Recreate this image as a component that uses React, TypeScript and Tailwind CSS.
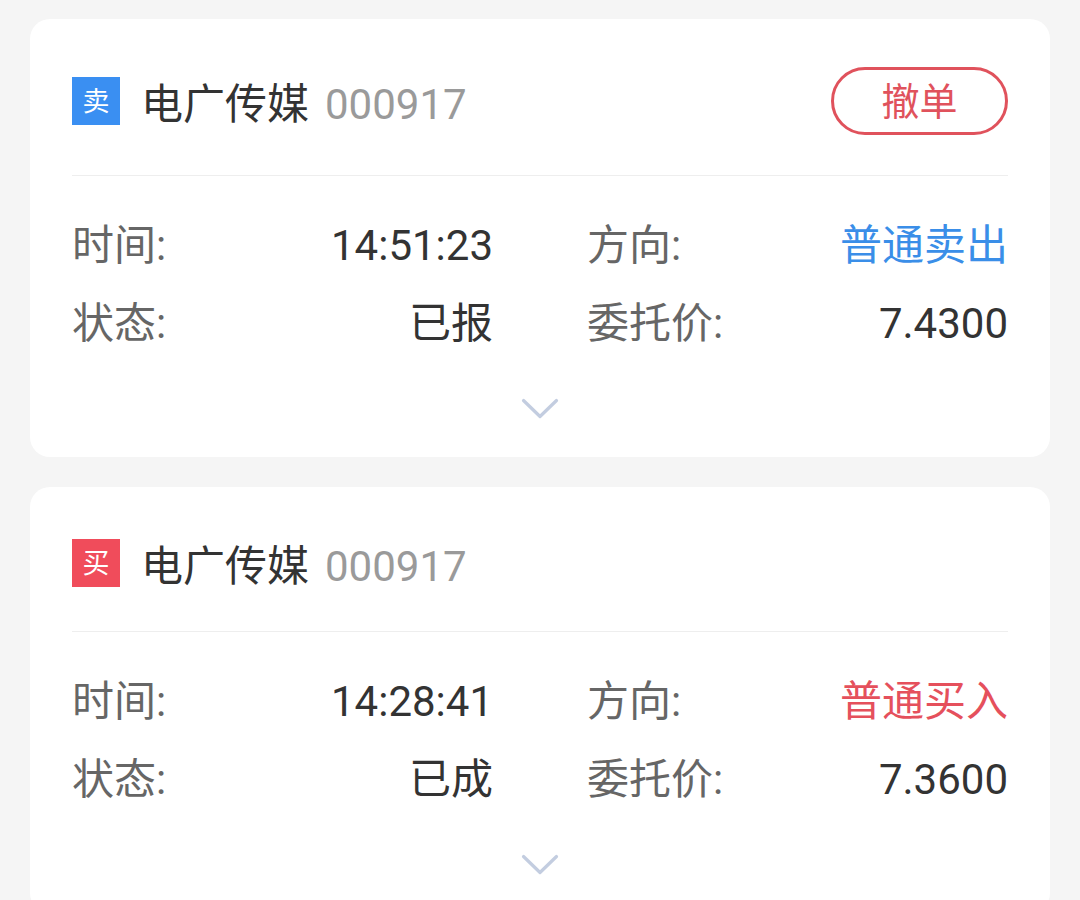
import React from "react";

type Order = {
  side: "sell" | "buy";
  name: string;
  code: string;
  time: string;
  status: string;
  direction: string;
  price: string;
  cancel: boolean;
};

const orders: Order[] = [
  { side: "sell", name: "电广传媒", code: "000917", time: "14:51:23", status: "已报", direction: "普通卖出", price: "7.4300", cancel: true },
  { side: "buy", name: "电广传媒", code: "000917", time: "14:28:41", status: "已成", direction: "普通买入", price: "7.3600", cancel: false },
];

const font = { fontFamily: "Roboto, 'Noto Sans CJK SC', 'Noto Sans', sans-serif" };

function Card({ o }: { o: Order }) {
  const sell = o.side === "sell";
  return (
    <div className="mx-[30px] rounded-[20px] bg-white px-[42px] pt-[48px] pb-[37px]">
      <div className="flex min-h-[56px] items-center">
        <div
          className={
            "flex h-[48px] w-[48px] items-center justify-center pt-[2px] text-[27px] leading-none text-white " +
            (sell ? "bg-[#3a8ff2]" : "bg-[#f04c5b]")
          }
        >
          {sell ? "卖" : "买"}
        </div>
        <span className="ml-[21px] pt-[7px] text-[42px] leading-[49px] text-[#333333]">{o.name}</span>
        <span className="ml-[16px] pt-[7px] text-[42px] leading-[49px] text-[#9a9a9a]">{o.code}</span>
        <div className="flex-1" />
        {o.cancel && (
          <div className="flex h-[68px] w-[177px] items-center justify-center rounded-full border-[3px] border-[#e0525c] pt-[2px] text-[38px] text-[#e0525c]">
            撤单
          </div>
        )}
      </div>
      <div className="mt-[40px] h-px bg-[#eeeeee]" />
      <div className="mt-[42px] grid grid-cols-2 gap-x-[94px] gap-y-[22px] text-[42px] leading-[56px]">
        <div className="flex justify-between">
          <span className="text-[#666666]">时间:</span>
          <span className="text-[#333333]">{o.time}</span>
        </div>
        <div className="flex justify-between">
          <span className="text-[#666666]">方向:</span>
          <span className={sell ? "text-[#3a8ee8]" : "text-[#e5505c]"}>{o.direction}</span>
        </div>
        <div className="flex justify-between">
          <span className="text-[#666666]">状态:</span>
          <span className="text-[#333333]">{o.status}</span>
        </div>
        <div className="flex justify-between">
          <span className="text-[#666666]">委托价:</span>
          <span className="text-[#333333]">{o.price}</span>
        </div>
      </div>
      <div className="mt-[46px] flex justify-center">
        <svg width="38" height="22" viewBox="0 0 38 22" fill="none">
          <path d="M2.5 2.5 L19 18.5 L35.5 2.5" stroke="#c3cde0" strokeWidth="3.2" strokeLinecap="round" strokeLinejoin="round" />
        </svg>
      </div>
    </div>
  );
}

export default function App() {
  return (
    <div className="min-h-[900px] bg-[#f5f5f5] pt-[19px]" style={font}>
      <div className="flex flex-col gap-[30px]">
        {orders.map((o, i) => (
          <Card key={i} o={o} />
        ))}
      </div>
    </div>
  );
}
